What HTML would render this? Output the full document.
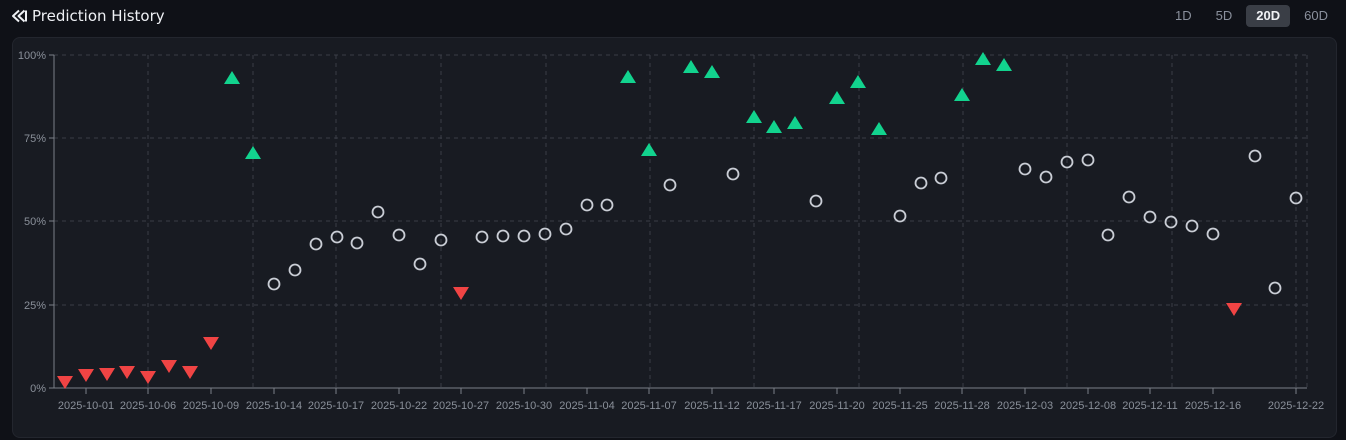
<!DOCTYPE html>
<html><head><meta charset="utf-8"><style>
html,body{margin:0;padding:0;width:1346px;height:440px;background:#0f1117;overflow:hidden;font-family:"Liberation Sans",sans-serif;}
.title{position:absolute;left:11px;top:7px;color:#eef0f4;font-size:15px;font-family:"DejaVu Sans",sans-serif;display:flex;align-items:center;gap:4px;}
.tabs{position:absolute;right:8px;top:5px;display:flex;gap:4px;}
.tabs div{color:#8a909c;font-size:13px;padding:3px 10px 4px;border-radius:4px;}
.tabs .a{background:#3a3e46;color:#f0f2f5;font-weight:bold;}
.panel{position:absolute;left:12px;top:37px;width:1323px;height:399px;background:#181b22;border:1px solid #23262e;border-radius:8px;}
svg{position:absolute;left:0;top:0;}
</style></head><body>
<div class="title"><svg style="position:static" width="17" height="14" viewBox="0 0 17 14"><path d="M8 1.5 L2 7 L8 12.5 M13.5 1.5 L7.5 7 L13.5 12.5 M15 1.5 V12.5" fill="none" stroke="#eef0f4" stroke-width="2" stroke-linejoin="round"/></svg>Prediction History</div>
<div class="tabs"><div>1D</div><div>5D</div><div class="a">20D</div><div>60D</div></div>
<div class="panel"></div>
<svg width="1346" height="440" id="c"></svg>
<script>
const s=document.getElementById('c');let h='';
const ys={100:55,75:138,50:221,25:305};
for(const k in ys){h+=`<line x1="54" x2="1307" y1="${ys[k]}" y2="${ys[k]}" stroke="#3a3e47" stroke-dasharray="4,4"/><line x1="49" x2="54" y1="${ys[k]}" y2="${ys[k]}" stroke="#7a7f88"/><text x="46" y="${ys[k]+4}" fill="#8a909a" font-size="11" text-anchor="end">${k}%</text>`;}
h+=`<text x="46" y="392" fill="#8a909a" font-size="11" text-anchor="end">0%</text><line x1="49" x2="54" y1="388" y2="388" stroke="#7a7f88"/>`;
[148,253,336,441,546,650,754,859,963,1067,1172,1296,1307].forEach(x=>h+=`<line x1="${x}" x2="${x}" y1="55" y2="388" stroke="#3a3e47" stroke-dasharray="4,4"/>`);
h+=`<line x1="54" x2="54" y1="55" y2="388" stroke="#7a7f88"/><line x1="54" x2="1307" y1="388" y2="388" stroke="#7a7f88"/>`;
const L=[[86,'2025-10-01'],[148,'2025-10-06'],[211,'2025-10-09'],[274,'2025-10-14'],[336,'2025-10-17'],[399,'2025-10-22'],[461,'2025-10-27'],[524,'2025-10-30'],[587,'2025-11-04'],[649,'2025-11-07'],[712,'2025-11-12'],[774,'2025-11-17'],[837,'2025-11-20'],[900,'2025-11-25'],[962,'2025-11-28'],[1025,'2025-12-03'],[1088,'2025-12-08'],[1150,'2025-12-11'],[1213,'2025-12-16'],[1296,'2025-12-22']];
L.forEach(([x,t])=>h+=`<line x1="${x}" x2="${x}" y1="388" y2="394" stroke="#7a7f88"/><text x="${x}" y="409" fill="#8a909a" font-size="11" text-anchor="middle">${t}</text>`);
const R=[[65,382],[86,375],[107,374],[127,372],[148,377],[169,366],[190,372],[211,343],[461,293],[1234,309]];
const G=[[232,78],[253,153],[628,77],[649,150],[691,67],[712,72],[754,117],[774,127],[795,123],[837,98],[858,82],[879,129],[962,95],[983,59],[1004,65]];
const C=[[274,284],[295,270],[316,244],[337,237],[357,243],[378,212],[399,235],[420,264],[441,240],[482,237],[503,236],[524,236],[545,234],[566,229],[587,205],[607,205],[670,185],[733,174],[816,201],[900,216],[921,183],[941,178],[1025,169],[1046,177],[1067,162],[1088,160],[1108,235],[1129,197],[1150,217],[1171,222],[1192,226],[1213,234],[1255,156],[1275,288],[1296,198]];
R.forEach(([x,y])=>h+=`<path d="M${x-8} ${y-6}H${x+8}L${x} ${y+7}Z" fill="#f04444"/>`);
G.forEach(([x,y])=>h+=`<path d="M${x-8} ${y+6}H${x+8}L${x} ${y-7}Z" fill="#12d38e"/>`);
C.forEach(([x,y])=>h+=`<circle cx="${x}" cy="${y}" r="5.5" fill="none" stroke="#c9cdd5" stroke-width="1.8"/>`);
s.innerHTML=h;
</script>
</body></html>
